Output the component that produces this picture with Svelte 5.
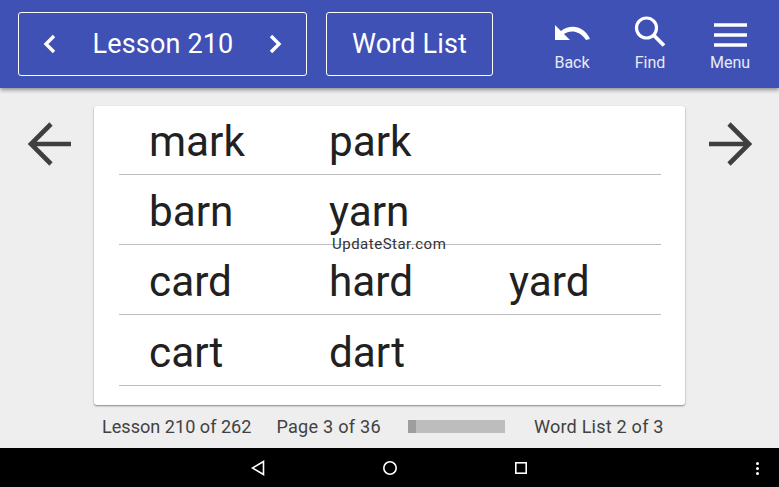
<script>
	const rows = [
		['mark', 'park', ''],
		['barn', 'yarn', ''],
		['card', 'hard', 'yard'],
		['cart', 'dart', '']
	];
</script>

<div class="screen">
	<header class="topbar">
		<div class="box lesson">
			<svg width="16" height="22" viewBox="0 0 16 22"><path d="M12 3 L4 11 L12 19" fill="none" stroke="#fff" stroke-width="3.400"/></svg>
			<span>Lesson 210</span>
			<svg width="16" height="22" viewBox="0 0 16 22"><path d="M3 3 L11 11 L3 19" fill="none" stroke="#fff" stroke-width="3.400"/></svg>
		</div>
		<div class="box words"><span>Word List</span></div>
		<div class="tools">
			<div class="tool back">
				<svg width="38" height="26" viewBox="0 0 38 26"><path d="M2 4 V19 H17 L11 13 C17 8.500 27 9.500 33 19 L37 18 C31 5 18 2.500 8 10 Z" fill="#fff"/></svg>
				<span>Back</span>
			</div>
			<div class="tool find">
				<svg width="34" height="32" viewBox="0 0 34 32"><circle cx="13.500" cy="13" r="10" fill="none" stroke="#fff" stroke-width="3.200"/><path d="M20.500 20 L31 30.500" stroke="#fff" stroke-width="3.800" fill="none"/></svg>
				<span>Find</span>
			</div>
			<div class="tool menu">
				<svg width="35" height="24" viewBox="0 0 35 24"><path d="M1 2 H34 M1 12 H34 M1 22 H34" stroke="#fff" stroke-width="3.600"/></svg>
				<span>Menu</span>
			</div>
		</div>
	</header>

	<main class="body">
		<svg class="arrow" width="46" height="46" viewBox="0 0 46 46"><path d="M45 23 H6 M25 3 L5 23 L25 43" fill="none" stroke="#3f3f3f" stroke-width="4.600"/></svg>
		<section class="card">
			{#each rows as row}
				<div class="row">
					{#each row as word}
						<span class="word">{word}</span>
					{/each}
				</div>
			{/each}
			<div class="mark">UpdateStar.com</div>
		</section>
		<svg class="arrow" width="46" height="46" viewBox="0 0 46 46"><path d="M2 23 H41 M22 3 L42 23 L22 43" fill="none" stroke="#3f3f3f" stroke-width="4.600"/></svg>
	</main>

	<div class="status">
		<span class="s1">Lesson 210 of 262</span>
		<span class="s2">Page 3 of 36</span>
		<div class="progress"><div class="done"></div></div>
		<span class="s3">Word List 2 of 3</span>
	</div>

	<footer class="navbar">
		<svg class="nav-back" width="14" height="16" viewBox="0 0 14 16"><path d="M12.500 1.500 V14.500 L1.500 8 Z" fill="none" stroke="#fff" stroke-width="1.600"/></svg>
		<svg class="nav-home" width="16" height="16" viewBox="0 0 16 16"><circle cx="8" cy="8" r="6.200" fill="none" stroke="#fff" stroke-width="1.600"/></svg>
		<svg class="nav-recent" width="14" height="14" viewBox="0 0 14 14"><rect x="1.800" y="1.800" width="10.400" height="10.400" fill="none" stroke="#fff" stroke-width="1.600"/></svg>
		<div class="dots"><i></i><i></i><i></i></div>
	</footer>
</div>

<style>
	:global(body) {
		margin: 0;
	}

	.screen {
		width: 779px;
		height: 487px;
		display: flex;
		flex-direction: column;
		overflow: hidden;
		background: #eeeeee;
		font-family: Roboto, "Liberation Sans", sans-serif;
	}

	.topbar {
		height: 88px;
		flex: none;
		box-sizing: border-box;
		padding: 12px 0 0 18px;
		display: flex;
		align-items: flex-start;
		background: #3f51b5;
		box-shadow: 0 2px 4px rgba(0, 0, 0, 0.4);
		position: relative;
		color: #fff;
	}

	.box {
		height: 64px;
		box-sizing: border-box;
		border: 1.500px solid #fff;
		border-radius: 3px;
		display: flex;
		align-items: center;
		font-size: 27px;
		letter-spacing: 0.15px;
	}

	.lesson {
		width: 289px;
		padding: 0 22px 0 23px;
		justify-content: space-between;
	}

	.words {
		width: 167px;
		margin-left: 19px;
		justify-content: center;
	}

	.tools {
		margin-left: 40px;
		display: flex;
		height: 64px;
	}

	.tool {
		display: flex;
		flex-direction: column;
		align-items: center;
		justify-content: flex-end;
		font-size: 16px;
		color: #e8eaf6;
		line-height: 20px;
		height: 61px;
		width: 78px;
	}

	.tool svg {
		margin-bottom: 6px;
	}

	.menu {
		width: 82px;
	}

	.body {
		flex: none;
		height: 318px;
		display: flex;
		align-items: flex-start;
		justify-content: space-between;
		padding: 18px 26px 0 26px;
		box-sizing: border-box;
	}

	.arrow {
		margin-top: 15px;
	}

	.card {
		width: 591px;
		height: 299px;
		box-sizing: border-box;
		padding: 0 24px 0 25px;
		background: #fff;
		border-radius: 3px;
		box-shadow: 0 1px 2px rgba(0, 0, 0, 0.45);
		position: relative;
	}

	.row {
		height: 70.400px;
		box-sizing: border-box;
		padding-top: 2.500px;
		border-bottom: 1.500px solid #bdbdbd;
		display: grid;
		grid-template-columns: 180px 180px 1fr;
		padding-left: 30px;
		font-size: 42.300px;
		color: #212121;
	}

	.row:first-child {
		height: 68.500px;
		padding-top: 1px;
	}

	.word {
		line-height: 70px;
	}

	.mark {
		position: absolute;
		left: 238px;
		top: 129px;
		font-size: 15px;
		color: #333;
		letter-spacing: 0.5px;
	}

	.status {
		flex: 1;
		display: flex;
		align-items: center;
		font-size: 18.100px;
		color: #424242;
		padding: 0 0 1px 102px;
	}

	.s2 {
		margin-left: 25px;
		letter-spacing: 0.25px;
	}

	.progress {
		width: 97px;
		height: 13px;
		margin-left: 27px;
		background: #bdbdbd;
	}

	.done {
		width: 8px;
		height: 100%;
		background: #9e9e9e;
	}

	.s3 {
		margin-left: 29px;
		letter-spacing: 0.2px;
	}

	.navbar {
		flex: none;
		height: 39px;
		background: #000;
		position: relative;
		display: flex;
		align-items: center;
	}

	.nav-back {
		margin-left: 251px;
	}

	.nav-home {
		margin-left: 117px;
	}

	.nav-recent {
		margin-left: 116px;
	}

	.dots {
		position: absolute;
		right: 20px;
		top: 14px;
		display: flex;
		flex-direction: column;
		gap: 2px;
	}

	.dots i {
		width: 3px;
		height: 3px;
		background: #fff;
		border-radius: 50%;
	}
</style>
